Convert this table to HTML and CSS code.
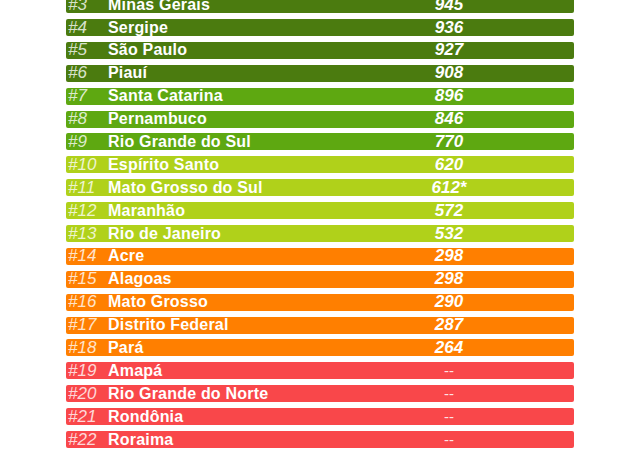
FILE: index.html
```html
<!DOCTYPE html>
<html>
<head>
<meta charset="utf-8">
<link rel="stylesheet" href="styles.css">
</head>
<body>
<div class="list">
  <div class="row dark"><span class="rank">#3</span><span class="name">Minas Gerais</span><span class="score">945</span></div>
  <div class="row dark"><span class="rank">#4</span><span class="name">Sergipe</span><span class="score">936</span></div>
  <div class="row dark"><span class="rank">#5</span><span class="name">São Paulo</span><span class="score">927</span></div>
  <div class="row dark"><span class="rank">#6</span><span class="name">Piauí</span><span class="score">908</span></div>
  <div class="row green"><span class="rank">#7</span><span class="name">Santa Catarina</span><span class="score">896</span></div>
  <div class="row green"><span class="rank">#8</span><span class="name">Pernambuco</span><span class="score">846</span></div>
  <div class="row green"><span class="rank">#9</span><span class="name">Rio Grande do Sul</span><span class="score">770</span></div>
  <div class="row lime"><span class="rank">#10</span><span class="name">Espírito Santo</span><span class="score">620</span></div>
  <div class="row lime"><span class="rank">#11</span><span class="name">Mato Grosso do Sul</span><span class="score">612*</span></div>
  <div class="row lime"><span class="rank">#12</span><span class="name">Maranhão</span><span class="score">572</span></div>
  <div class="row lime"><span class="rank">#13</span><span class="name">Rio de Janeiro</span><span class="score">532</span></div>
  <div class="row orange"><span class="rank">#14</span><span class="name">Acre</span><span class="score">298</span></div>
  <div class="row orange"><span class="rank">#15</span><span class="name">Alagoas</span><span class="score">298</span></div>
  <div class="row orange"><span class="rank">#16</span><span class="name">Mato Grosso</span><span class="score">290</span></div>
  <div class="row orange"><span class="rank">#17</span><span class="name">Distrito Federal</span><span class="score">287</span></div>
  <div class="row orange"><span class="rank">#18</span><span class="name">Pará</span><span class="score">264</span></div>
  <div class="row red"><span class="rank">#19</span><span class="name">Amapá</span><span class="score dash">--</span></div>
  <div class="row red"><span class="rank">#20</span><span class="name">Rio Grande do Norte</span><span class="score dash">--</span></div>
  <div class="row red"><span class="rank">#21</span><span class="name">Rondônia</span><span class="score dash">--</span></div>
  <div class="row red"><span class="rank">#22</span><span class="name">Roraima</span><span class="score dash">--</span></div>
</div>
</body>
</html>
```
FILE: styles.css
```css
html, body {
  margin: 0;
  padding: 0;
  background: #ffffff;
  overflow: hidden;
}
body {
  width: 640px;
  height: 450px;
  font-family: "Liberation Sans", Arial, sans-serif;
}
.list {
  display: flex;
  flex-direction: column;
  gap: 5.9px;
  margin: -3.9px 0 0 66px;
  width: 508px;
}
.row {
  display: grid;
  grid-template-columns: 42px 1fr 250px;
  align-items: center;
  height: 17px;
  border-radius: 2px;
  color: #ffffff;
  font-size: 16px;
  line-height: 16px;
  white-space: nowrap;
}
.rank {
  padding-left: 2px;
  font-size: 17px;
  font-style: italic;
  color: rgba(255, 255, 255, 0.8);
}
.name {
  font-weight: bold;
  letter-spacing: 0.2px;
}
.score {
  text-align: center;
  font-size: 17px;
  font-weight: bold;
  font-style: italic;
}
.score.dash {
  font-style: normal;
  font-weight: normal;
  font-size: 15px;
  color: rgba(255, 255, 255, 0.85);
}
.dark { background: #4b7b0f; }
.green { background: #5ea811; }
.lime { background: #b0d11a; }
.orange { background: #ff7f00; }
.red { background: #f9474a; }
```
